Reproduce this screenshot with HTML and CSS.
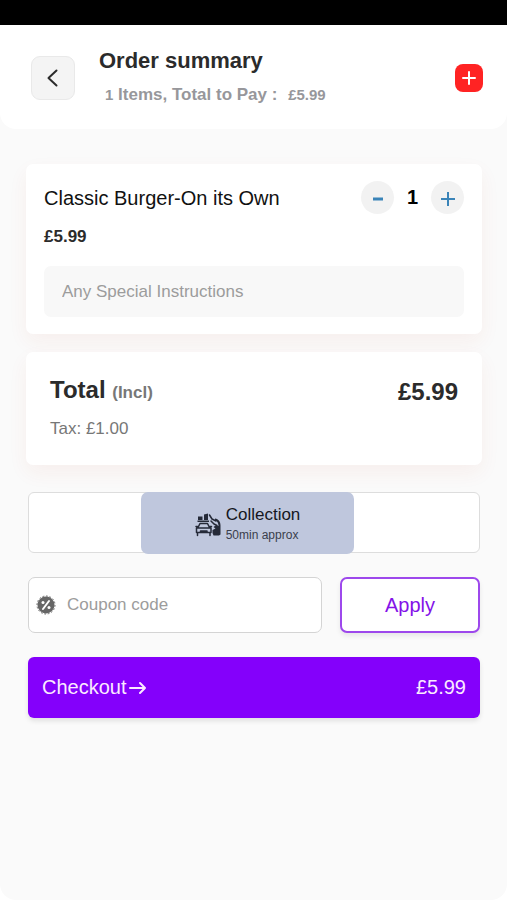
FILE: index.html
```html
<!DOCTYPE html>
<html lang="en">
<head>
<meta charset="utf-8">
<meta name="viewport" content="width=device-width, initial-scale=1">
<title>Order summary</title>
<link rel="stylesheet" href="styles.css">
</head>
<body>
<div class="status-bar"></div>
<div class="screen">
  <header class="header">
    <button class="back" type="button" aria-label="Back">
      <svg width="12" height="20" viewBox="0 0 12 20"><path d="M9.500 2.500 1.500 10l8 7.500"/></svg>
    </button>
    <div class="heading">
      <h1>Order summary</h1>
      <p><small>1</small> <span>Items, Total to Pay :</span> <small class="pay">£5.99</small></p>
    </div>
    <button class="add" type="button" aria-label="Add item">
      <svg width="16" height="16" viewBox="0 0 16 16"><path d="M8 2v12M2 8h12"/></svg>
    </button>
  </header>

  <main class="content">
    <section class="card item">
      <div class="item-row">
        <h2>Classic Burger-On its Own</h2>
        <div class="stepper">
          <button type="button" aria-label="Decrease quantity">
            <svg width="16" height="16" viewBox="0 0 16 16"><path class="minus" d="M3 9h10"/></svg>
          </button>
          <span class="quantity">1</span>
          <button type="button" aria-label="Increase quantity">
            <svg width="16" height="16" viewBox="0 0 16 16"><path class="plus" d="M8 2v14M1 9h14"/></svg>
          </button>
        </div>
      </div>
      <p class="item-price">£5.99</p>
      <input class="instructions" type="text" aria-label="Special instructions" placeholder="Any Special Instructions">
    </section>

    <section class="card total">
      <div class="total-row">
        <h2>Total <span>(Incl)</span></h2>
        <strong>£5.99</strong>
      </div>
      <p>Tax: £1.00</p>
    </section>

    <form class="actions">
      <div class="method">
        <button class="collection" type="button">
          <svg width="26" height="24" viewBox="0 0 26 24">
            <path class="fill" d="M3 3.500h4.500V7H3zM9 1.500l4-1V7H9zM2.500 7.500H14V9H2.500z"/>
            <path class="line" d="M3 14.500 5 10.500h7.500l2 4M1.500 15h14.500v4.500H1.500zM2.500 20v2.500M15 20v2.500M5.500 19.500v-1.500h6.500v1.500M1 13.500h1.500M15 13.500h1.500"/>
            <path class="line" d="M14.500 2l2.500 4 4 2M16 8l3 3 3 1.500"/>
            <path class="fill" d="M20 5.500c3.500.5 5.500 3 5.500 7V21.500l-1.500 1H18.500L17.500 20v-3l3-1.500-2-1.500 2-1.500 3 .5c0-3-1-4.500-3.500-6z"/>
          </svg>
          <span class="method-text">Collection<small>50min approx</small></span>
        </button>
      </div>

      <div class="coupon-row">
        <label class="coupon">
          <svg width="20" height="20" viewBox="0 0 20 20">
            <circle class="disc" cx="10" cy="10" r="8.500"/>
            <circle class="teeth" cx="10" cy="10" r="9" pathLength="64"/>
            <path class="slash" d="m13 6-6 8"/>
            <circle class="dot" cx="7" cy="7.500" r="1.500"/>
            <circle class="dot" cx="13" cy="12.500" r="1.500"/>
          </svg>
          <input type="text" aria-label="Coupon code" placeholder="Coupon code">
        </label>
        <button class="apply" type="button">Apply</button>
      </div>

      <button class="checkout" type="button">
        <span class="checkout-label">Checkout
          <svg width="17" height="14" viewBox="0 0 17 14"><path d="M1 7h15M11 2l5 5-5 5"/></svg>
        </span>
        <span>£5.99</span>
      </button>
    </form>
  </main>
</div>
</body>
</html>
```

FILE: styles.css
```css
* {
  box-sizing: border-box;
}

body {
  margin: 0;
  min-height: 100vh;
  display: flex;
  flex-direction: column;
  background: #fff;
  color: #2b2b2b;
  font-family: "Liberation Sans", Arial, sans-serif;
}

h1, h2, p {
  margin: 0;
}

button, input {
  font: inherit;
  color: inherit;
}

button {
  padding: 0;
  border: 0;
  display: flex;
  align-items: center;
  justify-content: center;
}

svg {
  display: block;
  flex: none;
  fill: none;
  stroke: currentColor;
  stroke-width: 2;
  stroke-linecap: round;
  stroke-linejoin: round;
}

.status-bar {
  height: 25px;
  background: #000;
}

.screen {
  flex: 1;
  background: #fafafa;
  border-radius: 0 0 16px 16px;
}

.header {
  display: flex;
  align-items: center;
  height: 104px;
  padding: 2px 24px 0 31px;
  background: #fff;
  border-radius: 0 0 16px 16px;
}

.back {
  width: 44px;
  height: 44px;
  border: 1px solid #e9e9e9;
  border-radius: 9px;
  background: #f4f4f4;
}

.heading {
  flex: 1;
  margin-left: 24px;
}

.heading h1 {
  font-size: 22px;
  line-height: 28px;
}

.heading p {
  margin: 10px 0 0 6px;
  font-size: 17px;
  line-height: 20px;
  font-weight: bold;
  color: #97979b;
}

.heading h1 {
  margin-top: -4px;
}

.heading small {
  font-size: 15px;
}

.heading .pay {
  margin-left: 6px;
}

.add {
  width: 28px;
  height: 28px;
  border-radius: 8px;
  background: #ff2323;
  color: #fff;
}

.content {
  padding: 35px 25px 32px 26px;
}

.card {
  background: #fff;
  border-radius: 7px;
  box-shadow: 0 8px 20px rgba(200, 70, 40, 0.06);
}

.item {
  padding: 17px 18px;
}

.item-row, .total-row {
  display: flex;
  align-items: center;
  justify-content: space-between;
}

.item h2 {
  font-size: 20px;
  line-height: 24px;
  font-weight: normal;
  color: #111;
}

.stepper {
  display: flex;
  align-items: center;
}

.stepper button {
  width: 33px;
  height: 33px;
  border-radius: 50%;
  background: #f2f2f2;
  color: #3a84b8;
}

.stepper svg {
  stroke-linecap: butt;
}

.minus {
  stroke-width: 3;
}

.quantity {
  width: 37px;
  text-align: center;
  font-size: 20px;
  font-weight: bold;
  color: #000;
}

.item-price {
  margin: 13px 0 19px;
  font-size: 17px;
  line-height: 20px;
  font-weight: bold;
}

.instructions {
  display: block;
  width: 100%;
  height: 51px;
  padding: 0 18px;
  border: 0;
  border-radius: 7px;
  background: #f8f8f8;
  font-size: 17px;
}

::placeholder {
  color: #9c9c9c;
  opacity: 1;
}

.total {
  margin-top: 18px;
  padding: 24px;
  min-height: 113px;
}

.total h2, .total strong {
  font-size: 24px;
  line-height: 28px;
}

.total h2 span {
  font-size: 17px;
  color: #777;
}

.total p {
  margin-top: 12px;
  font-size: 17px;
  line-height: 20px;
  color: #777;
}

.actions {
  margin: 27px 2px 0;
}

.method {
  display: flex;
  justify-content: center;
  height: 61px;
  padding: 0 12px;
  border: 1px solid #ddd;
  border-radius: 6px;
  background: #fff;
}

.collection {
  width: 50%;
  height: 62px;
  margin: -1px 13px 0 0;
  padding-top: 4px;
  border-radius: 7px;
  background: #bfc7dd;
  gap: 5px;
  color: #151722;
  text-align: left;
}

.collection .line {
  stroke: #252a38;
  stroke-width: 1.5;
}

.collection .fill {
  fill: #252a38;
  stroke: none;
}

.method-text {
  font-size: 17px;
  line-height: 20px;
}

.method-text small {
  display: block;
  font-size: 12px;
  color: #3a3e4c;
}

.coupon-row {
  display: flex;
  gap: 18px;
  margin-top: 24px;
}

.coupon {
  display: flex;
  align-items: center;
  gap: 11px;
  flex: 1;
  min-width: 0;
  height: 56px;
  padding: 0 7px;
  border: 1px solid #d4d4d4;
  border-radius: 7px;
  background: #fff;
}

.coupon input {
  flex: 1;
  min-width: 0;
  padding: 0;
  border: 0;
  background: none;
  font-size: 17px;
}

.coupon svg {
  color: #fff;
}

.disc, .teeth {
  fill: #666;
  stroke: none;
}

.teeth {
  fill: none;
  stroke: #666;
  stroke-width: 1;
  stroke-linecap: butt;
  stroke-dasharray: 2 2;
}

.dot {
  fill: #fff;
  stroke: none;
}

.apply {
  width: 140px;
  height: 56px;
  border: 2px solid #9d48ec;
  border-radius: 7px;
  background: #fff;
  box-shadow: 0 3px 5px rgba(0, 0, 0, 0.08);
  color: #8413e8;
  font-size: 20px;
}

.checkout {
  width: 100%;
  height: 61px;
  margin-top: 24px;
  padding: 0 14px;
  justify-content: space-between;
  border-radius: 6px;
  background: #8400fb;
  box-shadow: 0 3px 5px rgba(0, 0, 0, 0.1);
  color: #fbeaff;
  font-size: 20px;
}

.checkout-label {
  display: flex;
  align-items: center;
  gap: 2px;
}
```
